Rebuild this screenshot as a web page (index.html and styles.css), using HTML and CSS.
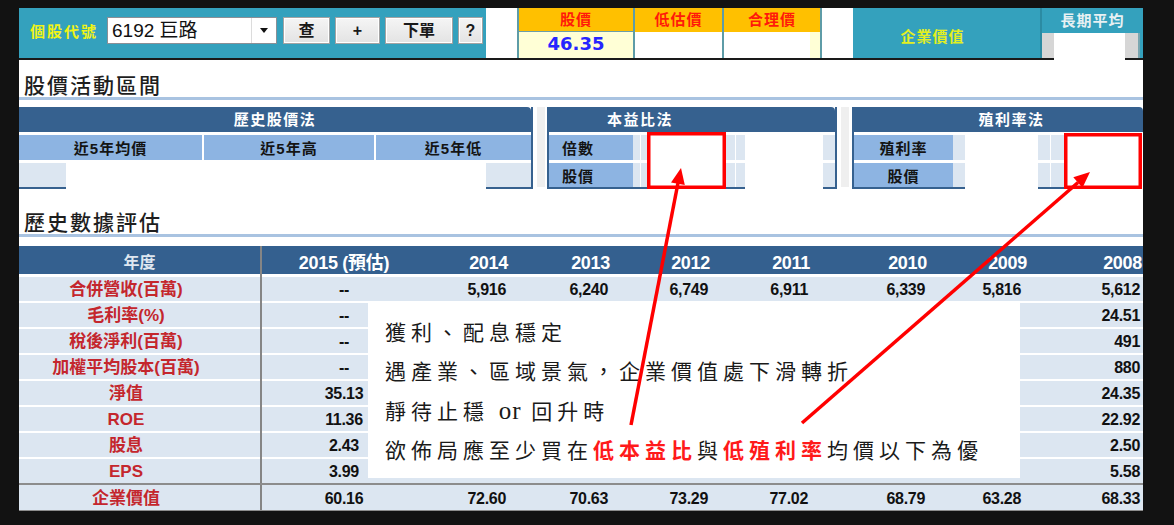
FILE: index.html
```html
<!DOCTYPE html>
<html lang="zh-Hant">
<head>
<meta charset="utf-8">
<title>個股評價</title>
<link rel="stylesheet" href="styles.css">
</head>
<body>
<div class="page">
  <header class="topbar">
    <div class="quote-panel">
      <span class="code-label">個股代號</span>
      <div class="select"><span class="select-text">6192 巨路</span><span class="select-arrow"></span></div>
      <button class="btn btn-q">查</button>
      <button class="btn btn-plus">+</button>
      <button class="btn btn-order">下單</button>
      <button class="btn btn-help">?</button>
    </div>
    <div class="spacer"></div>
    <div class="price-table">
      <div class="pt-col c1"><div class="pt-head">股價</div><div class="pt-val price">46.35</div></div>
      <div class="pt-col c2"><div class="pt-head">低估價</div><div class="pt-val"></div></div>
      <div class="pt-col c3"><div class="pt-head">合理價</div><div class="pt-val fair"></div></div>
    </div>
    <div class="spacer"></div>
    <div class="ev-panel">企業價值</div>
    <div class="avg-panel">
      <div class="avg-head">長期平均</div>
      <div class="avg-val"><span class="g1"></span><span class="w"></span><span class="g2"></span><span class="ln"></span></div>
    </div>
  </header>
  <div class="rule"><span class="r1"></span><span class="r2"></span><span class="r3"></span></div>

  <h2 class="title">股價活動區間</h2>

  <div class="sections">
    <section class="sec hist">
      <div class="sec-head">歷史股價法</div>
      <div class="sec-row r-top gap">
        <div class="lbl h1">近5年均價</div>
        <div class="lbl h2">近5年高</div>
        <div class="lbl h3">近5年低</div>
      </div>
      <div class="sec-row r-bot">
        <div class="lt hv1"></div>
        <div class="wh hv2"></div>
        <div class="lt hv3"></div>
      </div>
    </section>
    <div class="sep sep1"></div>
    <section class="sec pe">
      <div class="sec-head pe-head">本益比法</div>
      <div class="sec-row r-top">
        <div class="lbl pl">倍數</div><div class="lt p1"></div><div class="wh p2"></div><div class="lt p3"></div><div class="wh p4"></div><div class="lt p5"></div>
      </div>
      <div class="sec-row r-bot">
        <div class="lbl pl">股價</div><div class="lt p1"></div><div class="wh p2"></div><div class="lt p3"></div><div class="wh p4"></div><div class="lt p5"></div>
      </div>
    </section>
    <div class="sep sep2"></div>
    <section class="sec yld">
      <div class="sec-head yld-head">殖利率法</div>
      <div class="sec-row r-top">
        <div class="lbl yl">殖利率</div><div class="lt y1"></div><div class="wh y2"></div><div class="lt y3"></div><div class="wh y4"></div>
      </div>
      <div class="sec-row r-bot">
        <div class="lbl yl">股價</div><div class="lt y1"></div><div class="wh y2"></div><div class="lt y3"></div><div class="wh y4"></div>
      </div>
    </section>
  </div>

  <h2 class="title title2">歷史數據評估</h2>

  <div class="table">
    <div class="tr thead">
      <div class="c lbl-c">年度</div><div class="c y15">2015 (預估)</div><div class="c y14">2014</div><div class="c y13">2013</div><div class="c y12">2012</div><div class="c y11">2011</div><div class="c y10">2010</div><div class="c y09">2009</div><div class="c y08">2008</div>
    </div>
    <div class="tr">
      <div class="c lbl-c">合併營收(百萬)</div><div class="c y15">--</div><div class="c y14">5,916</div><div class="c y13">6,240</div><div class="c y12">6,749</div><div class="c y11">6,911</div><div class="c y10">6,339</div><div class="c y09">5,816</div><div class="c y08">5,612</div>
    </div>
    <div class="tr">
      <div class="c lbl-c">毛利率(%)</div><div class="c y15">--</div><div class="c y14"></div><div class="c y13"></div><div class="c y12"></div><div class="c y11"></div><div class="c y10"></div><div class="c y09"></div><div class="c y08">24.51</div>
    </div>
    <div class="tr">
      <div class="c lbl-c">稅後淨利(百萬)</div><div class="c y15">--</div><div class="c y14"></div><div class="c y13"></div><div class="c y12"></div><div class="c y11"></div><div class="c y10"></div><div class="c y09"></div><div class="c y08">491</div>
    </div>
    <div class="tr">
      <div class="c lbl-c">加權平均股本(百萬)</div><div class="c y15">--</div><div class="c y14"></div><div class="c y13"></div><div class="c y12"></div><div class="c y11"></div><div class="c y10"></div><div class="c y09"></div><div class="c y08">880</div>
    </div>
    <div class="tr">
      <div class="c lbl-c">淨值</div><div class="c y15">35.13</div><div class="c y14"></div><div class="c y13"></div><div class="c y12"></div><div class="c y11"></div><div class="c y10"></div><div class="c y09"></div><div class="c y08">24.35</div>
    </div>
    <div class="tr">
      <div class="c lbl-c">ROE</div><div class="c y15">11.36</div><div class="c y14"></div><div class="c y13"></div><div class="c y12"></div><div class="c y11"></div><div class="c y10"></div><div class="c y09"></div><div class="c y08">22.92</div>
    </div>
    <div class="tr">
      <div class="c lbl-c">股息</div><div class="c y15">2.43</div><div class="c y14"></div><div class="c y13"></div><div class="c y12"></div><div class="c y11"></div><div class="c y10"></div><div class="c y09"></div><div class="c y08">2.50</div>
    </div>
    <div class="tr">
      <div class="c lbl-c">EPS</div><div class="c y15">3.99</div><div class="c y14"></div><div class="c y13"></div><div class="c y12"></div><div class="c y11"></div><div class="c y10"></div><div class="c y09"></div><div class="c y08">5.58</div>
    </div>
    <div class="tr total">
      <div class="c lbl-c">企業價值</div><div class="c y15">60.16</div><div class="c y14">72.60</div><div class="c y13">70.63</div><div class="c y12">73.29</div><div class="c y11">77.02</div><div class="c y10">68.79</div><div class="c y09">63.28</div><div class="c y08">68.33</div>
    </div>

    <div class="note">
      <p>獲利、配息穩定</p>
      <p>遇產業、區域景氣，企業價值處下滑轉折</p>
      <p>靜待止穩 <span class="latin">or</span> 回升時</p>
      <p>欲佈局應至少買在<span class="red">低本益比</span>與<span class="red">低殖利率</span>均價以下為優</p>
    </div>
  </div>

  <svg class="marks" width="1124" height="503" viewBox="0 0 1124 503">
    <rect x="629.75" y="125.75" width="75.5" height="53.5" fill="none" stroke="#ff0000" stroke-width="3.5"/>
    <rect x="1046.75" y="126.75" width="74.5" height="52.5" fill="none" stroke="#ff0000" stroke-width="3.5"/>
    <line x1="612" y1="417" x2="659" y2="175" stroke="#ff0000" stroke-width="3.5"/>
    <polygon points="662,160 665.8,177 652,174.4" fill="#ff0000"/>
    <line x1="783" y1="415" x2="1059" y2="174.5" stroke="#ff0000" stroke-width="3.5"/>
    <polygon points="1071,164 1063.5,179.8 1054.3,169.2" fill="#ff0000"/>
  </svg>
</div>
</body>
</html>
```

FILE: styles.css
```css
* { box-sizing: border-box; margin: 0; padding: 0; }
html, body { background: #121212; }
body {
  width: 1174px;
  height: 525px;
  padding: 8px 31px 14px 19px;
  overflow: hidden;
  font-family: "Liberation Sans", "Noto Sans CJK TC", sans-serif;
}
.page {
  position: relative;
  width: 1124px;
  height: 503px;
  background: #fff;
  overflow: hidden;
}

/* ---------- top bar ---------- */
.topbar { display: flex; height: 50px; }
.quote-panel {
  width: 467px;
  background: #34a1bd;
  display: flex;
  align-items: flex-start;
  padding: 9px 0 0 11px;
}
.code-label {
  width: 77px;
  line-height: 29px;
  font-size: 15px;
  font-weight: bold;
  letter-spacing: 2px;
  color: #f0f316;
}
.select {
  display: flex;
  width: 170px;
  height: 27px;
  background: #fff;
  border: 1px solid #8a8f96;
}
.select-text {
  flex: 1;
  padding-left: 4px;
  font-size: 19px;
  line-height: 25px;
  color: #111;
}
.select-arrow {
  width: 25px;
  border-left: 1px solid #dcdcdc;
  display: flex;
  align-items: center;
  justify-content: center;
}
.select-arrow::after {
  content: "";
  border-left: 4px solid transparent;
  border-right: 4px solid transparent;
  border-top: 5px solid #111;
}
.btn {
  height: 27px;
  margin-left: 5px;
  background: linear-gradient(#f5f5f5, #e3e3e3);
  border: 1px solid #a3a3a3;
  box-shadow: inset 0 0 0 1px #fff;
  font-family: "Liberation Sans", "Noto Sans CJK TC", sans-serif;
  font-size: 16px;
  font-weight: bold;
  color: #1a1a1a;
  line-height: 24px;
}
.btn-q { width: 47px; margin-left: 6px; }
.btn-plus { width: 45px; }
.btn-order { width: 68px; }
.btn-help { width: 25px; }

.spacer { width: 31px; background: #fff; }
.price-table { display: flex; width: 305px; }
.pt-col { display: flex; flex-direction: column; border-left: 2px solid #5e9ca7; }
.c1 { width: 116px; }
.c2 { width: 89px; }
.c3 { width: 100px; border-right: 2px solid #5e9ca7; }
.pt-head {
  height: 24px;
  background: #ffc000;
  color: #ff1a0a;
  font-size: 15px;
  font-weight: bold;
  letter-spacing: 1px;
  text-align: center;
  line-height: 24px;
}
.c1 .pt-head { border-bottom: 1px solid #6b9ea8; }
.pt-val { flex: 1; background: #fff; }
.price {
  background: #ffffd6;
  color: #2626ff;
  font-family: "DejaVu Sans", sans-serif;
  font-weight: bold;
  font-size: 18px;
  line-height: 24px;
  text-align: center;
}
.fair { background: linear-gradient(to right, #fff 86px, #ffffd6 86px); }
.ev-panel {
  width: 187px;
  background: #34a1bd;
  color: #e2ef22;
  font-size: 15px;
  font-weight: bold;
  letter-spacing: 1px;
  display: flex;
  align-items: center;
  justify-content: center;
  padding: 4px 28px 0 0;
}
.avg-panel {
  width: 103px;
  background: #34a1bd;
  border-left: 2px solid #2b8ba3;
  display: flex;
  flex-direction: column;
}
.avg-head {
  height: 25px;
  color: #e8f1f3;
  font-size: 15px;
  font-weight: bold;
  letter-spacing: 1px;
  text-align: center;
  line-height: 25px;
}
.avg-val { flex: 1; display: flex; }
.avg-val .g1 { width: 12px; background: #d6d6d6; }
.avg-val .w { width: 71px; background: #fff; }
.avg-val .g2 { width: 13px; background: #d6d6d6; }
.avg-val .ln { width: 2px; background: #7aa6b0; }

.rule { display: flex; height: 2px; }
.rule .r1 { width: 1035px; background: #1a1a1a; }
.rule .r2 { width: 71px; background: #fff; }
.rule .r3 { width: 18px; background: #1a1a1a; }

/* ---------- titles ---------- */
.title {
  height: 40px;
  display: flex;
  align-items: flex-end;
  padding: 0 0 1px 5px;
  font-family: "Noto Sans CJK TC", sans-serif;
  font-size: 21px;
  font-weight: 500;
  letter-spacing: 2px;
  line-height: 24px;
  color: #1e1e1e;
  border-bottom: 3px solid #a9c3e1;
}
.title2 { height: 48px; }

/* ---------- valuation sections ---------- */
.sections { display: flex; height: 82px; margin-top: 7px; }
.sep { width: 8px; background: #efefef; margin-left: 4px; height: 80px; }
.sep1 { margin-right: 2px; }
.sep2 { margin-right: 3px; }
.sec { display: flex; flex-direction: column; border-left: 2px solid #36618f; border-right: 2px solid #36618f; }
.hist { width: 514px; border-left: 0; }
.pe { width: 290px; }
.yld { width: 291px; border-right: 0; }
.sec-head {
  height: 25px;
  background: #36618f;
  color: #fff;
  font-size: 15px;
  font-weight: bold;
  letter-spacing: 1.5px;
  text-align: center;
  line-height: 25px;
  border-top-right-radius: 4px;
}
.pe-head { text-align: left; padding-left: 58px; }
.yld-head { padding-left: 26px; }
.sec-row { display: flex; }
.r-top { height: 25px; margin-top: 3px; }
.r-bot { height: 26px; margin-top: 3px; }
.r-top.gap { gap: 2px; }
.lbl {
  background: #8db4e2;
  color: #141414;
  font-size: 15px;
  font-weight: bold;
  letter-spacing: 1px;
  display: flex;
  align-items: center;
  justify-content: center;
}
.lt { background: #dce6f1; }
.wh { background: #fff; }
.r-bot .lbl, .r-bot .lt { border-bottom: 2px solid #36618f; }
.h1 { width: 183px; }
.h2 { width: 170px; }
.h3 { width: 155px; }
.hv1 { width: 47px; }
.hv2 { width: 420px; }
.hv3 { width: 45px; }
.pl { width: 84px; padding-right: 26px; }
.p1 { width: 15px; background: linear-gradient(to right, #dce6f1 7px, #fff 7px, #fff 8px, #dce6f1 8px); }
.p2 { width: 78px; }
.p3 { width: 19px; background: linear-gradient(to right, #dce6f1 9px, #fff 9px, #fff 10px, #dce6f1 10px); }
.p4 { width: 78px; }
.p5 { width: 12px; }
.yl { width: 99px; }
.y1 { width: 12px; }
.y2 { width: 73px; }
.y3 { width: 26px; background: linear-gradient(to right, #dce6f1 12px, #fff 12px, #fff 13px, #dce6f1 13px); }
.y4 { width: 79px; }

/* ---------- history table ---------- */
.table {
  position: relative;
  margin-top: 9px;
  display: flex;
  flex-direction: column;
  gap: 2px;
  background: linear-gradient(to right, transparent 241px, #858585 241px, #858585 243px, transparent 243px);
}
.tr { display: flex; height: 24px; }
.c {
  background: #dce6f1;
  display: flex;
  align-items: flex-end;
  justify-content: flex-end;
  padding: 0 4px 2px 0;
  font-size: 16px;
  font-weight: bold;
  letter-spacing: -0.3px;
  line-height: 18px;
  color: #111;
}
.lbl-c {
  width: 241px;
  justify-content: center;
  padding-right: 27px;
  font-size: 17px;
  color: #c4262d;
  letter-spacing: 0;
}
.y15 { width: 164px; margin-left: 2px; justify-content: center; padding-right: 0; }
.y14 { width: 84px; }
.y13 { width: 102px; }
.y12 { width: 100px; }
.y11 { width: 100px; }
.y10 { width: 117px; }
.y09 { width: 100px; padding-right: 8px; }
.y08 { width: 114px; padding-right: 3px; }
.thead { height: 28px; margin-bottom: 1px; }
.thead .c {
  background: #34608f;
  color: #fff;
  font-size: 18px;
  padding-right: 2px;
  padding-bottom: 1px;
  line-height: 20px;
}
.thead .lbl-c { color: #dfe7f0; font-size: 16px; padding-right: 0; }
.thead .y15 { padding-right: 0; white-space: pre; }
.thead .y08 { padding-right: 1px; }
.total {
  height: 28px;
  margin-top: -2px;
  border-top: 2px solid #8c8c8c;
  border-bottom: 1px solid #8c8c8c;
}

.note {
  position: absolute;
  left: 349px;
  top: 57px;
  width: 652px;
  height: 175px;
  background: #fff;
  padding: 9px 0 0 17px;
  font-family: "Noto Sans CJK TC", sans-serif;
  font-size: 21px;
  letter-spacing: 5px;
  line-height: 39.3px;
  color: #1a1a1a;
}
.note .latin { font-family: "Liberation Serif", serif; font-size: 25px; letter-spacing: 1px; }
.note .red { color: #ff1a1a; font-weight: bold; }

.marks { position: absolute; left: 0; top: 0; pointer-events: none; }
```
